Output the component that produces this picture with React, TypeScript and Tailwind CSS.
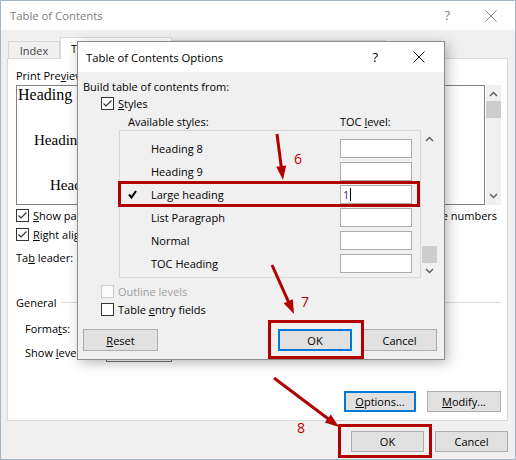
import React from "react";

const red = "#b20000";

function CheckBox({ checked = false, disabled = false }: { checked?: boolean; disabled?: boolean }) {
  return (
    <span
      className={`flex h-[13px] w-[13px] shrink-0 items-center justify-center border ${
        disabled ? "border-[#cccccc] bg-[#fbfbfb]" : "border-[#333333] bg-white"
      }`}
    >
      {checked && (
        <svg width="11" height="11" viewBox="0 0 11 11">
          <path d="M1.5 5.5 L4 8 L9.5 2.5" fill="none" stroke="#333" strokeWidth="1.2" />
        </svg>
      )}
    </span>
  );
}

function Chevron({ up = false }: { up?: boolean }) {
  return (
    <svg width="9" height="6" viewBox="0 0 9 6" className="shrink-0">
      <path
        d={up ? "M1 5 L4.5 1.5 L8 5" : "M1 1 L4.5 4.5 L8 1"}
        fill="none"
        stroke="#606060"
        strokeWidth="1.5"
      />
    </svg>
  );
}

function Close({ color }: { color: string }) {
  return (
    <svg width="12" height="12" viewBox="0 0 12 12" className="shrink-0">
      <path d="M0.5 0.5 L11.5 11.5 M11.5 0.5 L0.5 11.5" stroke={color} strokeWidth="1" />
    </svg>
  );
}

function Arrow({ x1, y1, x2, y2 }: { x1: number; y1: number; x2: number; y2: number }) {
  const dx = x2 - x1;
  const dy = y2 - y1;
  const len = Math.hypot(dx, dy);
  const ux = dx / len;
  const uy = dy / len;
  const L = 14;
  const W = 5;
  const bx = x2 - ux * L;
  const by = y2 - uy * L;
  const pts = `${x2},${y2} ${bx - uy * W},${by + ux * W} ${bx + uy * W},${by - ux * W}`;
  return (
    <g>
      <line x1={x1} y1={y1} x2={bx + ux * 2} y2={by + uy * 2} stroke={red} strokeWidth={3} />
      <polygon points={pts} fill={red} />
    </g>
  );
}

const styles = ["Heading 8", "Heading 9", "Large heading", "List Paragraph", "Normal", "TOC Heading"];

export default function App() {
  return (
    <div className="relative h-[460px] w-[516px] overflow-hidden border border-[#a3b5c9] bg-[#f0f0f0] font-['Open_Sans',sans-serif] text-[11px] leading-[15px] text-black">
      {/* Title bar */}
      <div className="flex h-[29px] items-center bg-white pl-[9px] text-[#808080]">
        <span className="text-[11.3px]">Table of Contents</span>
        <span className="ml-auto text-[13px]">?</span>
        <span className="ml-[35px] mr-[18px]">
          <Close color="#8a8a8a" />
        </span>
      </div>

      {/* Body */}
      <div className="flex flex-col pl-[6px] pr-[7px]">
        {/* Tabs */}
        <div className="flex h-[28px] items-end pl-[1px]">
          <div className="flex h-[17px] w-[52px] items-center justify-center border-x border-t border-[#d9d9d9] text-[#444]">
            Index
          </div>
          <div className="relative -mb-px flex h-[22px] w-[112px] items-center justify-center border-x border-t border-[#d9d9d9] bg-white">
            Table of Contents
          </div>
          <div className="flex h-[18px] w-[97px] items-center justify-center border-r border-t border-[#d9d9d9] text-[#444]">
            Table of Figures
          </div>
          <div className="flex h-[18px] w-[117px] items-center justify-center border-r border-t border-[#d9d9d9] text-[#444]">
            Table of Authorities
          </div>
        </div>

        {/* Panel */}
        <div className="flex h-[363px] flex-col border border-[#d9d9d9] bg-white pl-[8px] pr-[6px]">
          <div className="flex gap-[16px]">
            {/* Print preview */}
            <div className="w-[230px]">
              <div className="pt-[9px]">
                Print Pre<u>v</u>iew
              </div>
              <div className="mt-[2px] h-[120px] overflow-hidden border border-[#828282] pl-[1px] font-['Liberation_Serif',serif] whitespace-nowrap">
                <div className="text-[16px] leading-[18px]">Heading 1 .......................... 1</div>
                <div className="mt-[27px] pl-[16px] text-[15px] leading-[18px]">Heading 2 ...................... 3</div>
                <div className="mt-[27px] pl-[32px] text-[15px] leading-[18px]">Heading 3 ................. 5</div>
              </div>
              <div className="mt-[1px] flex h-[19px] items-center gap-[4px]">
                <CheckBox checked />
                <span>
                  <u>S</u>how page numbers
                </span>
              </div>
              <div className="flex h-[19px] items-center gap-[4px]">
                <CheckBox checked />
                <span>
                  <u>R</u>ight align page numbers
                </span>
              </div>
              <div className="mt-[5px] flex h-[16px] items-center">
                <span>
                  Ta<u>b</u> leader:
                </span>
              </div>
            </div>

            {/* Web preview */}
            <div className="flex-1">
              <div className="pt-[9px]">
                We<u>b</u> Preview
              </div>
              <div className="mt-[2px] flex h-[120px] gap-[1px]">
                <div className="flex-1 border border-[#828282] bg-white" />
                <div className="flex w-[15px] flex-col items-center bg-[#f0f0f0]">
                  <div className="pt-[6px]">
                    <Chevron up />
                  </div>
                  <div className="mt-[4px] h-[17px] w-full bg-[#cdcdcd]" />
                  <div className="flex-1" />
                  <div className="pb-[6px]">
                    <Chevron />
                  </div>
                </div>
              </div>
              <div className="mt-[1px] flex h-[19px] items-center gap-[4px] pl-[12px] whitespace-nowrap">
                <CheckBox checked />
                <span>
                  Use <u>h</u>yperlinks instead of page numbers
                </span>
              </div>
            </div>
          </div>

          {/* General */}
          <div className="mt-[29px] flex h-[16px] items-center gap-[5px]">
            <span>General</span>
            <div className="h-px flex-1 bg-[#dcdcdc]" />
          </div>
          <div className="mt-[8px] flex h-[20px] items-center pl-[9px]">
            <span className="w-[81px]">
              Forma<u>t</u>s:
            </span>
            <div className="h-[20px] w-[150px] border border-[#7a7a7a] bg-[#e5e5e5]" />
          </div>
          <div className="mt-[4px] flex h-[20px] items-center pl-[9px]">
            <span className="w-[81px]">
              Show <u>l</u>evels:
            </span>
            <div className="h-[20px] w-[66px] border border-[#7a7a7a] bg-white" />
          </div>
          <div className="mt-[29px] flex justify-end gap-[11px]">
            <div className="flex h-[21px] w-[72px] items-center justify-center border-2 border-[#0078d7] bg-[#e1e1e1]">
              <span>
                <u>O</u>ptions...
              </span>
            </div>
            <div className="flex h-[21px] w-[74px] items-center justify-center border border-[#adadad] bg-[#e1e1e1]">
              <span>
                <u>M</u>odify...
              </span>
            </div>
          </div>
        </div>

        {/* Bottom buttons */}
        <div className="mt-[10px] flex justify-end gap-[11px]">
          <div className="flex h-[21px] w-[73px] items-center justify-center border border-[#adadad] bg-[#e1e1e1]">OK</div>
          <div className="flex h-[21px] w-[73px] items-center justify-center border border-[#adadad] bg-[#e1e1e1]">Cancel</div>
        </div>
      </div>

      {/* Overlay layer: options dialog and annotations */}
      <div className="pointer-events-none absolute -left-px -top-px z-20 h-[460px] w-[516px]">
        <div className="absolute left-[77px] top-[41px] flex h-[319px] w-[368px] flex-col border border-[#8c8c8c] bg-[#f0f0f0] shadow-[3px_3px_12px_rgba(0,0,0,0.28)]">
          <div className="flex h-[30px] items-center bg-white pl-[8px]">
            <span className="text-[11.3px]">Table of Contents Options</span>
            <span className="ml-auto text-[13px]">?</span>
            <span className="ml-[35px] mr-[19px]">
              <Close color="#222" />
            </span>
          </div>

          <div className="flex flex-1 flex-col pl-[5px] pr-[7px]">
            <div className="pt-[7px]">Build table of contents from:</div>
            <div className="flex h-[19px] items-center gap-[4px] pl-[18px]">
              <CheckBox checked />
              <span>
                <u>S</u>tyles
              </span>
            </div>
            <div className="flex h-[16px] items-center pl-[45px]">
              <span className="w-[212px]">Available styles:</span>
              <span>
                TOC <u>l</u>evel:
              </span>
            </div>
            <div className="ml-[36px] mt-[1px] flex">
              <div className="h-[148px] w-[302px] border border-[#d9d9d9] pt-[6px]">
                {styles.map((s) => (
                  <div key={s} className="flex h-[23px] items-center">
                    <div className="flex w-[31px] justify-start pl-[8px]">
                      {s === "Large heading" && (
                        <svg width="9" height="9" viewBox="0 0 9 9">
                          <path d="M1 4.5 L3.5 7.5 L8 1" fill="none" stroke="#000" strokeWidth="2" />
                        </svg>
                      )}
                    </div>
                    <span className="w-[189px]">{s}</span>
                    <div className="flex h-[19px] w-[72px] items-center border border-[#ababab] bg-white pl-[2px]">
                      {s === "Large heading" && (
                        <>
                          <span className="text-[#4b2a6f]">1</span>
                          <span className="ml-px h-[13px] w-px bg-black" />
                        </>
                      )}
                    </div>
                  </div>
                ))}
              </div>
              <div className="flex h-[148px] w-[16px] flex-col items-center pl-px">
                <div className="pt-[6px]">
                  <Chevron up />
                </div>
                <div className="flex-1" />
                <div className="h-[17px] w-full bg-[#cdcdcd]" />
                <div className="mt-[5px] pb-[4px]">
                  <Chevron />
                </div>
              </div>
            </div>
            <div className="mt-[4px] flex h-[18px] items-center gap-[4px] pl-[18px] text-[#a0a0a0]">
              <CheckBox disabled />
              <span>Outline levels</span>
            </div>
            <div className="flex h-[18px] items-center gap-[4px] pl-[18px]">
              <CheckBox />
              <span>
                Table <u>e</u>ntry fields
              </span>
            </div>
            <div className="mt-[11px] flex items-center justify-between">
              <div className="flex h-[22px] w-[75px] items-center justify-center border border-[#adadad] bg-[#e1e1e1]">
                <span>
                  <u>R</u>eset
                </span>
              </div>
              <div className="flex gap-[10px]">
                <div className="flex h-[22px] w-[74px] items-center justify-center border-2 border-[#0078d7] bg-[#e1e1e1]">
                  OK
                </div>
                <div className="flex h-[22px] w-[75px] items-center justify-center border border-[#adadad] bg-[#e1e1e1]">
                  Cancel
                </div>
              </div>
            </div>
          </div>
        </div>

        {/* Red highlight boxes */}
        <div className="absolute left-[118px] top-[181px] h-[26px] w-[302px] border-[3px] border-[#b20000]" />
        <div className="absolute left-[268px] top-[320px] h-[39px] w-[96px] border-[3px] border-[#b20000]" />
        <div className="absolute left-[338px] top-[424px] h-[34px] w-[94px] border-[3px] border-[#b20000]" />

        {/* Step numbers */}
        <span className="absolute left-[294px] top-[150px] text-[14px] leading-[18px] text-[#c00000]">6</span>
        <span className="absolute left-[301px] top-[293px] text-[14px] leading-[18px] text-[#c00000]">7</span>
        <span className="absolute left-[297px] top-[419px] text-[14px] leading-[18px] text-[#c00000]">8</span>

        <svg className="absolute left-0 top-0" width="516" height="460" viewBox="0 0 516 460">
          <Arrow x1={277} y1={134} x2={283} y2={180} />
          <Arrow x1={272} y1={265} x2={294} y2={314} />
          <Arrow x1={274} y1={378} x2={339} y2={427} />
        </svg>
      </div>
    </div>
  );
}
